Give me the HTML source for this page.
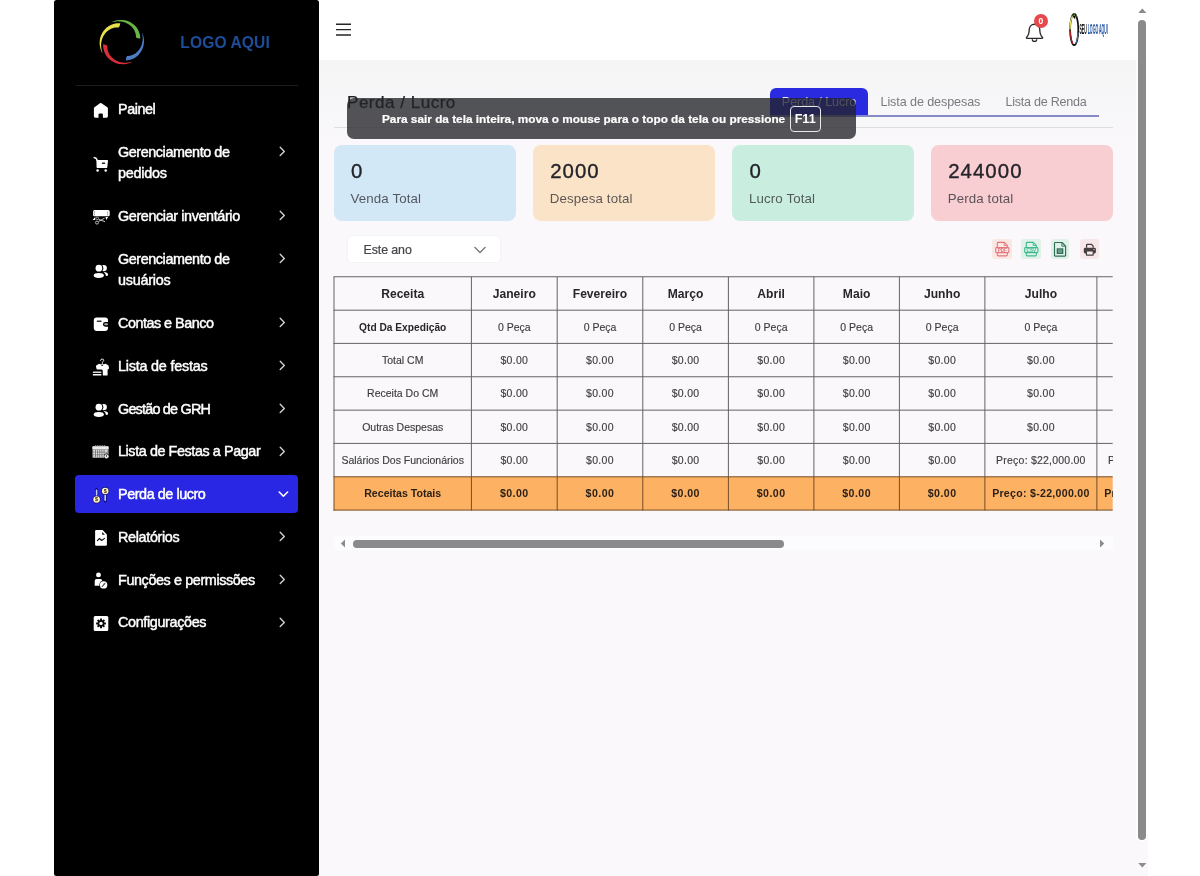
<!DOCTYPE html>
<html lang="pt-BR">
<head>
<meta charset="utf-8">
<title>Perda / Lucro</title>
<style>
*{box-sizing:border-box;margin:0;padding:0}
html,body{width:1200px;height:876px;overflow:hidden;background:#fff}
body{font-family:"Liberation Sans",sans-serif;position:relative;color:#333}
.abs{position:absolute}
/* sidebar */
#sb{position:absolute;left:54px;top:0;width:265px;height:876px;background:#000;border-radius:2.5px}
#sb .logotxt{position:absolute;left:126.3px;top:32.2px;font-weight:700;font-size:15.6px;letter-spacing:.1px;color:#1e4d99;white-space:nowrap;line-height:22px}
#sb .hr{position:absolute;left:22px;top:84.5px;width:222px;height:1px;background:#1c1c1c}
/* main */
#top{position:absolute;left:319px;top:0;width:829px;height:60px;background:#fff}
#main{position:absolute;left:319px;top:60px;width:829px;height:816px;background:#faf8fa linear-gradient(#f5f5f6,#faf8fa) 0 0/100% 90px no-repeat}
#vsb{position:absolute;left:1137px;top:0;width:11px;height:876px}

#top .ham{position:absolute;left:17px;top:23px;width:15px;height:13px}
#top .ham i{position:absolute;left:0;width:15px;height:1.4px;background:#2e2e2e}
.badge{position:absolute;left:1033.9px;top:14px;width:14px;height:14px;border-radius:50%;background:#e5484d;color:#fff;font-size:8.5px;font-weight:700;line-height:14px;text-align:center}
#ttl{position:absolute;left:347px;top:91.3px;font-size:17.1px;line-height:24px;color:#222226;white-space:nowrap;letter-spacing:.48px;-webkit-text-stroke:.25px #222226}
#hr1{position:absolute;left:334px;top:126.5px;width:779px;height:1px;background:#dedde0}
#tabline{position:absolute;left:770px;top:115.3px;width:329px;height:1.7px;background:#858bc6}
.tab{position:absolute;top:88px;height:28.5px;font-size:12.6px;line-height:28px;color:#7a7a80;white-space:nowrap;letter-spacing:-.1px}
.tab.on{left:770px;width:98px;background:#2a2be0;color:#e8e8ff;border-radius:6px 6px 0 0;text-align:center}
#ov{position:absolute;left:347px;top:98px;width:508.5px;height:40.5px;border-radius:7px;background:rgba(35,36,40,.775)}
#ov .t{position:absolute;left:35px;top:10.5px;font-size:11.8px;-webkit-text-stroke:.2px #fff;font-weight:700;color:#fff;line-height:20px;white-space:nowrap}
#ov .k{position:absolute;left:442.7px;top:7.5px;width:31px;height:26px;border:1px solid #e8e8e8;border-radius:4px;font-size:12.6px;font-weight:700;color:#fff;line-height:24px;text-align:center}
.card{position:absolute;top:145px;width:182.3px;height:76.3px;border-radius:8px}
.card b{position:absolute;left:17.5px;top:11.1px;font-size:20.4px;line-height:30px;font-weight:400;color:#23232a;-webkit-text-stroke:.35px #23232a;letter-spacing:1.05px}
.card span{position:absolute;left:17px;top:43.5px;font-size:13.3px;letter-spacing:.12px;line-height:20px;color:rgba(38,38,44,.74);white-space:nowrap}
#sel{position:absolute;left:347.4px;top:235px;width:153.2px;height:27.6px;border:1px solid #f4f3f6;border-radius:5px;background:#fff;font-size:12.4px;line-height:28.6px;color:#444448;padding-left:15.2px;-webkit-text-stroke:.2px #444448;letter-spacing:-.1px}
.ib{position:absolute;top:239px;width:19.5px;height:19.8px;border-radius:3px}
#hs{position:absolute;left:334px;top:536px;width:779px;height:14px;background:#fcfbfd}
#hs .th{position:absolute;left:19px;top:4px;width:431px;height:7.6px;border-radius:3.8px;background:#8a8a8b}
#sb .tx{position:absolute;left:64px;color:#fff;font-size:14.4px;line-height:21.2px;letter-spacing:-.5px;-webkit-text-stroke:.45px #fff;white-space:nowrap}
#sb .act{position:absolute;left:21px;width:223px;height:38.3px;border-radius:4px;background:#2927e3}
#tw{position:absolute;height:236px;overflow:hidden;font-size:10.5px;color:#3d3d40;-webkit-text-stroke:.15px #3d3d40}
#tw .r{position:absolute;left:0;width:100%}
#tw .c{position:absolute;top:.6px;text-align:center;white-space:nowrap}
#tw .c.l{text-align:left}
#tw .h .c{top:1px}
#tw .h{font-size:12.1px;font-weight:700;color:#27272b;-webkit-text-stroke:0}
#tw .q .c:first-child{font-weight:700;color:#27272b;font-size:10.2px;-webkit-text-stroke:0}
#tw .t{font-weight:700;color:#2c2117;font-size:10.6px;-webkit-text-stroke:0}
#tw .m{letter-spacing:.3px}
#tw .p{letter-spacing:.22px}
#tw .t .p{letter-spacing:.28px}
#tw .t .m{letter-spacing:.45px}
#wrap{position:absolute;left:0;top:0;width:1200px;height:876px;will-change:transform}

</style>
</head>
<body>
<div id="wrap">
<div id="sb">
<svg class="abs" style="left:40px;top:14px" width="56" height="56" viewBox="0 0 56 56"><path d="M16.9 8.5 L18.5 7.7 L20.1 7.0 L21.8 6.5 L23.5 6.2 L25.3 5.9 L27.0 5.9 L28.8 6.0 L30.5 6.2 L32.2 6.6 L33.8 7.1 L35.4 7.8 L36.9 8.6 L38.3 9.5 L39.6 10.5 L40.9 11.6 L42.0 12.8 L43.0 14.1 L43.9 15.5 L44.6 16.9 L45.2 18.4 L45.7 19.9 L46.0 21.4 L46.2 22.9 L46.3 24.5 L45.6 24.6 L42.6 23.9 L42.0 22.9 L41.9 21.6 L41.7 20.3 L41.4 19.1 L40.9 17.8 L40.4 16.5 L39.7 15.3 L38.9 14.2 L37.9 13.0 L36.9 12.0 L35.7 11.0 L34.5 10.2 L33.1 9.4 L31.7 8.8 L30.2 8.2 L28.7 7.8 L27.1 7.5 L25.4 7.4 L23.8 7.3 L22.1 7.5 L20.4 7.7 L18.7 8.1 L16.9 8.5z" fill="#68b548"/><path d="M48.1 18.6 L48.7 20.1 L49.3 21.7 L49.6 23.3 L49.9 24.9 L50.0 26.6 L50.0 28.2 L49.8 29.9 L49.5 31.5 L49.1 33.1 L48.6 34.6 L47.9 36.1 L47.1 37.5 L46.2 38.8 L45.3 40.0 L44.2 41.2 L43.0 42.2 L41.8 43.2 L40.5 44.0 L39.1 44.7 L37.7 45.3 L36.3 45.7 L34.9 46.1 L33.5 46.3 L32.0 46.4 L31.9 45.7 L32.4 42.7 L33.3 42.1 L34.5 42.0 L35.7 41.8 L37.0 41.5 L38.2 41.1 L39.4 40.6 L40.5 39.9 L41.7 39.2 L42.7 38.3 L43.7 37.3 L44.7 36.3 L45.5 35.1 L46.3 33.9 L47.0 32.6 L47.5 31.2 L48.0 29.7 L48.3 28.2 L48.6 26.7 L48.7 25.1 L48.7 23.5 L48.6 21.9 L48.3 20.3 L48.1 18.6z" fill="#4c7cc5"/><path d="M39.0 47.4 L37.4 48.3 L35.7 49.0 L33.9 49.5 L32.1 49.9 L30.3 50.2 L28.5 50.2 L26.7 50.1 L24.9 49.9 L23.1 49.4 L21.4 48.9 L19.8 48.1 L18.2 47.3 L16.7 46.3 L15.4 45.2 L14.1 44.0 L13.0 42.7 L12.0 41.3 L11.2 39.8 L10.5 38.3 L9.9 36.7 L9.5 35.1 L9.2 33.5 L9.1 31.9 L9.1 30.3 L9.8 30.3 L12.8 31.2 L13.3 32.3 L13.4 33.6 L13.5 35.0 L13.8 36.3 L14.2 37.7 L14.7 39.0 L15.4 40.3 L16.2 41.5 L17.2 42.7 L18.2 43.8 L19.4 44.8 L20.7 45.8 L22.1 46.6 L23.6 47.3 L25.1 47.9 L26.8 48.3 L28.4 48.6 L30.1 48.7 L31.9 48.8 L33.6 48.6 L35.4 48.3 L37.2 47.9 L39.0 47.4z" fill="#d82f3b"/><path d="M8.6 39.6 L7.7 37.9 L7.0 36.2 L6.4 34.4 L6.0 32.6 L5.7 30.7 L5.6 28.8 L5.7 27.0 L6.0 25.1 L6.4 23.3 L7.0 21.6 L7.8 19.9 L8.6 18.3 L9.7 16.8 L10.8 15.4 L12.1 14.1 L13.4 13.0 L14.9 12.0 L16.4 11.2 L18.0 10.5 L19.6 9.9 L21.2 9.5 L22.9 9.3 L24.5 9.2 L26.2 9.3 L26.2 10.0 L25.2 12.9 L24.0 13.4 L22.6 13.5 L21.3 13.6 L19.9 13.8 L18.5 14.2 L17.1 14.8 L15.8 15.5 L14.5 16.3 L13.3 17.2 L12.1 18.3 L11.1 19.5 L10.1 20.9 L9.3 22.3 L8.6 23.8 L8.0 25.4 L7.6 27.0 L7.3 28.8 L7.1 30.5 L7.1 32.3 L7.3 34.1 L7.6 35.9 L8.1 37.7 L8.6 39.6z" fill="#e8e04c"/></svg>
<div class="logotxt">LOGO AQUI</div>
<div class="hr"></div>
<svg class="abs" style="left:32px;top:96px" width="30" height="30" viewBox="0 0 30 30" ><path d="M13.9 7.3 a1.3 1.3 0 0 1 1.6 0 L21.3 11.3 a1.4 1.4 0 0 1 .6 1.1 V20.3 a1.4 1.4 0 0 1 -1.4 1.4 H16.9 V18.6 a1.1 1.1 0 0 0 -1.1 -1.1 h-2.2 a1.1 1.1 0 0 0 -1.1 1.1 V21.7 H9.3 a1.4 1.4 0 0 1 -1.4 -1.4 V12.4 a1.4 1.4 0 0 1 .6 -1.1z" fill="#fff"/></svg>
<div class="tx" style="top:98.6px"><span style="letter-spacing:-0.46px">Painel</span></div>
<svg class="abs" style="left:32px;top:148px" width="30" height="30" viewBox="0 0 30 30" ><path d="M8.2 9.6 L10 10.3 Q10.6 10.6 10.7 11.5 L10.9 12" stroke="#fff" stroke-width="1.5" fill="none" stroke-linecap="round"/><path d="M10.4 11.9 H21.2 a.8 .8 0 0 1 .8 .9 L21.3 19.2 a1 1 0 0 1 -1 .9 H11.6 a1 1 0 0 1 -1 -.9z" fill="#fff"/><rect x="15.8" y="14.4" width="3.4" height="1.5" rx=".6" fill="#222"/><circle cx="11.6" cy="22.5" r="1.25" fill="#fff"/><circle cx="19.7" cy="22.5" r="1.25" fill="#fff"/></svg>
<div class="tx" style="top:141.6px"><span style="letter-spacing:-0.43px">Gerenciamento de</span><br><span style="letter-spacing:-0.25px">pedidos</span></div>
<svg class="abs" style="left:224px;top:146px" width="8" height="11" viewBox="0 0 8 11" ><path d="M2.2 1.3 L6.3 5.4 L2.2 9.5" fill="none" stroke="#d4d4d4" stroke-width="1.35" stroke-linecap="round" stroke-linejoin="round"/></svg>
<svg class="abs" style="left:32px;top:201px" width="30" height="30" viewBox="0 0 30 30" ><rect x="7" y="9.1" width="16.7" height="6.2" rx="1.5" fill="#fff"/><path d="M8.5 10 Q7.5 12 8.5 14.4" stroke="#777" stroke-width=".7" fill="none"/><path d="M21.6 10 V14.6" stroke="#999" stroke-width=".7"/><path d="M6.6 19 L9.2 16 V19z M19.5 16 H22.1 L20.3 19z" fill="#fff"/><circle cx="11" cy="21.6" r="1.5" fill="none" stroke="#ccc" stroke-width=".9"/><circle cx="11.2" cy="17.3" r="1.3" fill="none" stroke="#bbb" stroke-width=".8"/><path d="M12.5 18.3 L19 20.7 M12.6 20.4 L18.5 17.2" stroke="#ddd" stroke-width=".9"/></svg>
<div class="tx" style="top:205.6px"><span style="letter-spacing:-0.39px">Gerenciar inventário</span></div>
<svg class="abs" style="left:224px;top:210px" width="8" height="11" viewBox="0 0 8 11" ><path d="M2.2 1.3 L6.3 5.4 L2.2 9.5" fill="none" stroke="#d4d4d4" stroke-width="1.35" stroke-linecap="round" stroke-linejoin="round"/></svg>
<svg class="abs" style="left:32px;top:255px" width="30" height="30" viewBox="0 0 30 30" ><circle cx="17.7" cy="13.1" r="3.2" fill="#fff"/><circle cx="12.9" cy="13.2" r="4.45" fill="#000"/><circle cx="12.9" cy="13.2" r="3.35" fill="#fff"/><ellipse cx="12.8" cy="20.5" rx="5.1" ry="2.45" fill="#fff"/><path d="M17.6 17 Q21.9 17 22.1 19.8 Q22.1 21 20 21.1 Q19.8 18.6 17.6 17z" fill="#fff"/></svg>
<div class="tx" style="top:248.6px"><span style="letter-spacing:-0.43px">Gerenciamento de</span><br><span style="letter-spacing:-0.24px">usuários</span></div>
<svg class="abs" style="left:224px;top:253px" width="8" height="11" viewBox="0 0 8 11" ><path d="M2.2 1.3 L6.3 5.4 L2.2 9.5" fill="none" stroke="#d4d4d4" stroke-width="1.35" stroke-linecap="round" stroke-linejoin="round"/></svg>
<svg class="abs" style="left:32px;top:308px" width="30" height="30" viewBox="0 0 30 30" ><rect x="7.8" y="9.4" width="14.2" height="13.5" rx="2.8" fill="#fff"/><rect x="10.7" y="12.5" width="5" height="1.4" rx=".7" fill="#333"/><path d="M22.5 14 H19.3 a2.35 2.35 0 0 0 0 4.7 H22.5z" fill="#000"/><rect x="18.2" y="15.3" width="3.8" height="2" rx="1" fill="#aaa"/></svg>
<div class="tx" style="top:312.6px"><span style="letter-spacing:-0.5px">Contas e Banco</span></div>
<svg class="abs" style="left:224px;top:317px" width="8" height="11" viewBox="0 0 8 11" ><path d="M2.2 1.3 L6.3 5.4 L2.2 9.5" fill="none" stroke="#d4d4d4" stroke-width="1.35" stroke-linecap="round" stroke-linejoin="round"/></svg>
<svg class="abs" style="left:32px;top:351px" width="30" height="30" viewBox="0 0 30 30" ><path d="M14.5 9.4 Q14.7 8 16.2 8 Q17.8 8.1 17.7 9.5 Q17.6 10.4 16.6 10.8 Q16.3 11 16.3 12.5" stroke="#fff" stroke-width=".9" fill="none" stroke-linecap="round"/><path d="M13 12.7 L10.3 14.5 Q9.7 15 10 15.8 L10.6 18 Q11 18.6 12 18.5 L15.8 18.5 Q16.8 19 16.8 20 V24 Q16.8 24.6 17.5 24.6 H21 Q21.6 24.6 21.6 24 V18.5 L22.6 18 Q23.2 17.6 23 16.8 L22.5 14.8 Q22.3 14.3 21.8 14 L19.5 12.7 Q16.3 14 13 12.7z" fill="#fff"/><ellipse cx="16.2" cy="14.5" rx="1" ry=".6" fill="#111"/><rect x="6.8" y="20.4" width="8.6" height="1.5" rx=".5" fill="#ddd"/><rect x="6.8" y="23" width="8.6" height="1.5" rx=".5" fill="#fff"/></svg>
<div class="tx" style="top:355.6px"><span style="letter-spacing:-0.22px">Lista de festas</span></div>
<svg class="abs" style="left:224px;top:360px" width="8" height="11" viewBox="0 0 8 11" ><path d="M2.2 1.3 L6.3 5.4 L2.2 9.5" fill="none" stroke="#d4d4d4" stroke-width="1.35" stroke-linecap="round" stroke-linejoin="round"/></svg>
<svg class="abs" style="left:32px;top:394px" width="30" height="30" viewBox="0 0 30 30" ><circle cx="17.7" cy="13.1" r="3.2" fill="#fff"/><circle cx="12.9" cy="13.2" r="4.45" fill="#000"/><circle cx="12.9" cy="13.2" r="3.35" fill="#fff"/><ellipse cx="12.8" cy="20.5" rx="5.1" ry="2.45" fill="#fff"/><path d="M17.6 17 Q21.9 17 22.1 19.8 Q22.1 21 20 21.1 Q19.8 18.6 17.6 17z" fill="#fff"/></svg>
<div class="tx" style="top:398.6px"><span style="letter-spacing:-0.79px">Gestão de GRH</span></div>
<svg class="abs" style="left:224px;top:403px" width="8" height="11" viewBox="0 0 8 11" ><path d="M2.2 1.3 L6.3 5.4 L2.2 9.5" fill="none" stroke="#d4d4d4" stroke-width="1.35" stroke-linecap="round" stroke-linejoin="round"/></svg>
<svg class="abs" style="left:32px;top:436px" width="30" height="30" viewBox="0 0 30 30" ><rect x="6.4" y="10.3" width="16.2" height="11.7" rx="1" fill="#9a9a9a"/><rect x="6.4" y="10.3" width="16.2" height="2.9" rx=".8" fill="#e8e8e8"/><path d="M9 9.8h10.5" stroke="#aaa" stroke-width="1" stroke-dasharray="1.3 .9"/><g fill="#eee"><rect x="7.5" y="14.2" width="13.8" height="1.4"/><rect x="7.5" y="16.7" width="12" height="1.5"/><rect x="7.5" y="19.3" width="10.5" height="1.5"/></g><g fill="#555"><rect x="9.3" y="13.8" width=".7" height="7.5"/><rect x="11.4" y="13.8" width=".7" height="7.5"/><rect x="13.5" y="13.8" width=".7" height="7.5"/><rect x="15.6" y="13.8" width=".7" height="7.5"/><rect x="17.7" y="13.8" width=".7" height="5"/></g><circle cx="20.5" cy="20.3" r="2.7" fill="#222"/><circle cx="20.5" cy="20.3" r="2.1" fill="#eee"/><rect x="20.15" y="18.9" width=".8" height="2" fill="#333"/></svg>
<div class="tx" style="top:441.1px"><span style="letter-spacing:-0.42px">Lista de Festas a Pagar</span></div>
<svg class="abs" style="left:224px;top:445.5px" width="8" height="11" viewBox="0 0 8 11" ><path d="M2.2 1.3 L6.3 5.4 L2.2 9.5" fill="none" stroke="#d4d4d4" stroke-width="1.35" stroke-linecap="round" stroke-linejoin="round"/></svg>
<div class="act" style="top:475.0px"></div>
<svg class="abs" style="left:32px;top:479px" width="30" height="30" viewBox="0 0 30 30" ><path d="M10.6 10.6 V16.5" stroke="#0f0f7a" stroke-width="3" stroke-linecap="round"/><path d="M10.6 11.4 V16.5" stroke="#c3cfff" stroke-width="1.6" stroke-linecap="round"/><path d="M19.2 16 V22" stroke="#0f0f7a" stroke-width="3" stroke-linecap="round"/><path d="M19.2 16 V21.2" stroke="#c3cfff" stroke-width="1.6" stroke-linecap="round"/><circle cx="10.6" cy="20.5" r="4" fill="#14146e"/><circle cx="10.6" cy="20.5" r="3.3" fill="#fff1c6"/><circle cx="19.2" cy="12" r="4" fill="#14146e"/><circle cx="19.2" cy="12" r="3.3" fill="#fff1c6"/><text x="10.6" y="22.4" text-anchor="middle" font-family="Liberation Sans, sans-serif" font-weight="700" font-size="5.4" fill="#33280a">$</text><text x="19.2" y="13.9" text-anchor="middle" font-family="Liberation Sans, sans-serif" font-weight="700" font-size="5.4" fill="#33280a">$</text></svg>
<div class="tx" style="top:483.9px"><span style="letter-spacing:-0.44px">Perda de lucro</span></div>
<svg class="abs" style="left:224px;top:489.8px" width="11" height="8" viewBox="0 0 11 8" ><path d="M1.2 2 L5.4 6.2 L9.6 2" fill="none" stroke="#fff" stroke-width="1.6" stroke-linecap="round" stroke-linejoin="round"/></svg>
<svg class="abs" style="left:32px;top:522px" width="30" height="30" viewBox="0 0 30 30" ><path d="M10.3 8.1 H16.6 L20.9 12.5 V22.6 a1.2 1.2 0 0 1 -1.2 1.2 H10.3 a1.2 1.2 0 0 1 -1.2 -1.2 V9.3 a1.2 1.2 0 0 1 1.2 -1.2z" fill="#fff"/><path d="M16.2 10 L18.9 12.8 H16.8 a.6 .6 0 0 1 -.6 -.6z" fill="#111"/><path d="M11.4 18.6 L13.5 16.5 L15.7 18.5 L18.5 16.4" stroke="#111" stroke-width="1.1" fill="none" stroke-linecap="round" stroke-linejoin="round"/></svg>
<div class="tx" style="top:526.6px"><span style="letter-spacing:-0.34px">Relatórios</span></div>
<svg class="abs" style="left:224px;top:531px" width="8" height="11" viewBox="0 0 8 11" ><path d="M2.2 1.3 L6.3 5.4 L2.2 9.5" fill="none" stroke="#d4d4d4" stroke-width="1.35" stroke-linecap="round" stroke-linejoin="round"/></svg>
<svg class="abs" style="left:32px;top:565px" width="30" height="30" viewBox="0 0 30 30" ><circle cx="12.5" cy="9.9" r="2.45" fill="#fff"/><path d="M10.5 13.9 H14.5 Q16.2 14 16.3 16 V20.8 H8.7 V16 Q8.8 14 10.5 13.9z" fill="#fff"/><circle cx="17.6" cy="19.9" r="4.3" fill="#000"/><circle cx="17.6" cy="19.9" r="3.7" fill="#fff"/><path d="M16.2 21.5 L18.5 18.8" stroke="#444" stroke-width="1.1" stroke-linecap="round"/><circle cx="18.6" cy="18.6" r=".9" fill="#666"/></svg>
<div class="tx" style="top:569.6px"><span style="letter-spacing:-0.4px">Funções e permissões</span></div>
<svg class="abs" style="left:224px;top:574px" width="8" height="11" viewBox="0 0 8 11" ><path d="M2.2 1.3 L6.3 5.4 L2.2 9.5" fill="none" stroke="#d4d4d4" stroke-width="1.35" stroke-linecap="round" stroke-linejoin="round"/></svg>
<svg class="abs" style="left:32px;top:608px" width="30" height="30" viewBox="0 0 30 30" ><rect x="7.7" y="8" width="14.6" height="15" rx="1.5" fill="#fff"/><g transform="translate(15 15.4)"><g fill="#0a0a0a"><circle r="3.3"/><rect x="-1" y="-4.9" width="2" height="9.8" rx=".3"/><rect x="-1" y="-4.9" width="2" height="9.8" rx=".3" transform="rotate(45)"/><rect x="-1" y="-4.9" width="2" height="9.8" rx=".3" transform="rotate(90)"/><rect x="-1" y="-4.9" width="2" height="9.8" rx=".3" transform="rotate(135)"/></g><circle r="1.7" fill="#fff"/></g></svg>
<div class="tx" style="top:612.3px"><span style="letter-spacing:-0.36px">Configurações</span></div>
<svg class="abs" style="left:224px;top:616.7px" width="8" height="11" viewBox="0 0 8 11" ><path d="M2.2 1.3 L6.3 5.4 L2.2 9.5" fill="none" stroke="#d4d4d4" stroke-width="1.35" stroke-linecap="round" stroke-linejoin="round"/></svg>
</div>
<div id="top">
  <svg class="abs" style="left:16px;top:20px" width="18" height="20" viewBox="0 0 18 20"><path d="M1 4.2H16M1 9.6H16M1 15H16" stroke="#262626" stroke-width="1.45" fill="none"/></svg>
</div>
<div id="main"></div>
<svg class="abs" style="left:1024px;top:21px" width="21" height="23" viewBox="0 0 21 23"><path d="M10.5 3.2c-3.2 0-5.3 2.5-5.3 5.6 0 4.6-1.6 6.6-2.7 7.6-.3.3-.1.9.4.9h15.2c.5 0 .7-.6.4-.9-1.1-1-2.7-3-2.7-7.6 0-3.1-2.1-5.6-5.3-5.6z" fill="none" stroke="#2a2a2a" stroke-width="1.35"/><path d="M8.3 18.2a2.2 2.2 0 0 0 4.4 0" fill="none" stroke="#2a2a2a" stroke-width="1.3"/></svg>
<div class="badge">0</div>
<svg class="abs" style="left:1062px;top:8px" width="52" height="44" viewBox="0 0 52 44"><g fill="none" stroke-linecap="round"><ellipse cx="12.2" cy="21.5" rx="4.1" ry="15.6" stroke="#0d0d0d" stroke-width="1.7"/><path d="M8.1 21 Q8.2 11.5 11 7.2" stroke="#e9e362" stroke-width="1.25"/><path d="M8.2 23 Q8.6 31 10.6 35.2" stroke="#b3202a" stroke-width="1.3"/><path d="M11.6 5.8 Q13.2 5 14.4 8" stroke="#4c8a33" stroke-width="1.1"/><path d="M16.2 25 Q15.8 32 13.8 35.6" stroke="#4a78b5" stroke-width="1"/><path d="M10.8 7.4 L12.8 10.2 M13.4 6.6 L12.6 9.6" stroke="#0d0d0d" stroke-width="1.2"/></g><g transform="translate(17.4 26) scale(.228 .88)"><text x="0" y="0" font-family="Liberation Sans, sans-serif" font-weight="700" font-size="15.6" fill="#111">SEU <tspan fill="#1d4fa3">LOGO AQUI</tspan></text></g></svg>

<div id="ttl">Perda / Lucro</div>
<div id="hr1"></div>
<div class="tab on">Perda / Lucro</div>
<div class="tab" style="left:880.5px">Lista de despesas</div>
<div class="tab" style="left:1005.5px;letter-spacing:-.27px">Lista de Renda</div>
<div id="tabline"></div>

<div class="card" style="left:333.5px;background:#d3e8f7"><b>0</b><span>Venda Total</span></div>
<div class="card" style="left:532.7px;background:#fbe3c8"><b>2000</b><span>Despesa total</span></div>
<div class="card" style="left:732px;background:#c9eedf"><b>0</b><span>Lucro Total</span></div>
<div class="card" style="left:930.7px;background:#f8ced2"><b>244000</b><span>Perda total</span></div>

<div id="sel">Este ano<svg class="abs" style="left:125px;top:8.5px" width="14" height="10" viewBox="0 0 14 10"><path d="M1.5 2 L7 7.5 L12.5 2" fill="none" stroke="#77777b" stroke-width="1.3"/></svg></div>

<div class="ib" style="left:992px;background:#fbe8e5"><svg class="abs" style="left:0;top:0" width="20" height="20" viewBox="0 0 20 20"><g fill="none" stroke="#e3767c" stroke-width="1.1" stroke-linejoin="round"><path d="M5.3 8.5 V4.3 a.9 .9 0 0 1 .9 -.9 H12.3 L15.3 6.4 V8.5"/><path d="M12.2 3.5 V6.5 H15.2" stroke-width=".9"/><rect x="3.7" y="8.6" width="13.2" height="5" rx=".8"/><path d="M5.3 13.7 V16 a.9 .9 0 0 0 .9 .9 H14.4 a.9 .9 0 0 0 .9 -.9 V13.7"/></g><text x="10.3" y="12.8" text-anchor="middle" font-family="Liberation Sans, sans-serif" font-weight="700" font-size="4.6" fill="#e3767c">PDF</text></svg></div>
<div class="ib" style="left:1021px;background:#dff1e9"><svg class="abs" style="left:0;top:0" width="20" height="20" viewBox="0 0 20 20"><g fill="none" stroke="#3fba8d" stroke-width="1.1" stroke-linejoin="round"><path d="M5.3 8.5 V4.3 a.9 .9 0 0 1 .9 -.9 H12.3 L15.3 6.4 V8.5"/><path d="M12.2 3.5 V6.5 H15.2" stroke-width=".9"/><rect x="3.7" y="8.6" width="13.2" height="5" rx=".8"/><path d="M5.3 13.7 V16 a.9 .9 0 0 0 .9 .9 H14.4 a.9 .9 0 0 0 .9 -.9 V13.7"/></g><text x="10.3" y="12.8" text-anchor="middle" font-family="Liberation Sans, sans-serif" font-weight="700" font-size="4.6" fill="#3fba8d">CSV</text></svg></div>
<div class="ib" style="left:1051.3px;width:17.5px;background:#e0f1e9"><svg class="abs" style="left:-1.6px;top:0" width="20" height="20" viewBox="0 0 20 20"><g fill="none" stroke="#2f6d57" stroke-width="1.15" stroke-linejoin="round"><path d="M5.3 3.5 H12 L15.6 7.1 V16.4 a.8 .8 0 0 1 -.8 .8 H5.3 a.8 .8 0 0 1 -.8 -.8 V4.3 a.8 .8 0 0 1 .8 -.8z"/><path d="M11.9 3.7 V7.2 H15.4" stroke-width=".9"/></g><rect x="6.7" y="9.3" width="6.6" height="5.7" fill="#2f6d57"/><path d="M9 10.3 V14 M11 10.3 V14" stroke="#bfe3d3" stroke-width=".8"/></svg></div>
<div class="ib" style="left:1080px;width:18.6px;background:#f7e7e9"><svg class="abs" style="left:.6px;top:1.6px" width="17" height="17" viewBox="0 0 20 20"><path d="M6.6 8 V4.6 a.7 .7 0 0 1 .7 -.7 H12.2 L14.3 6 V8" fill="none" stroke="#463e41" stroke-width="1.5" stroke-linejoin="round"/><rect x="3.3" y="8" width="14.2" height="6.6" rx="1.6" fill="#463e41"/><rect x="6.4" y="11.7" width="8" height="5" rx=".4" fill="#f7e8ea" stroke="#463e41" stroke-width="1.4"/><circle cx="15.3" cy="10.1" r=".7" fill="#f7e8ea"/></svg></div>

<div id="tw" style="left:333px;top:276px;width:779.7px"><svg class="abs" style="left:0;top:0" width="779.7" height="236" viewBox="0 0 779.7 236"><rect x="1.00" y="200.80" width="778.70" height="33.30" fill="#fdb163"/><path d="M0.50 0.75H779.70M0.50 34.20H779.70M0.50 67.40H779.70M0.50 100.75H779.70M0.50 134.15H779.70M0.50 167.40H779.70M1.00 0.75V200.80M138.40 0.75V200.80M224.20 0.75V200.80M309.80 0.75V200.80M395.40 0.75V200.80M480.90 0.75V200.80M566.40 0.75V200.80M651.90 0.75V200.80M763.90 0.75V200.80" stroke="#626266" stroke-width="1" fill="none"/><path d="M0.50 200.80H779.70M0.50 234.10H779.70M1.00 200.80V234.60M138.40 200.80V234.60M224.20 200.80V234.60M309.80 200.80V234.60M395.40 200.80V234.60M480.90 200.80V234.60M566.40 200.80V234.60M651.90 200.80V234.60M763.90 200.80V234.60" stroke="#744d24" stroke-width="1" fill="none"/></svg>
<div class="r h" style="top:0.75px;height:33.45px;line-height:33.45px">
<span class="c" style="left:1.00px;width:137.40px">Receita</span>
<span class="c" style="left:138.40px;width:85.80px">Janeiro</span>
<span class="c" style="left:224.20px;width:85.60px">Fevereiro</span>
<span class="c" style="left:309.80px;width:85.60px">Março</span>
<span class="c" style="left:395.40px;width:85.50px">Abril</span>
<span class="c" style="left:480.90px;width:85.50px">Maio</span>
<span class="c" style="left:566.40px;width:85.50px">Junho</span>
<span class="c" style="left:651.90px;width:112.00px">Julho</span>
<span class="c p" style="left:763.90px;width:112px">Agosto</span>
</div>
<div class="r q" style="top:34.20px;height:33.20px;line-height:33.20px">
<span class="c" style="left:1.00px;width:137.40px">Qtd Da Expedição</span>
<span class="c" style="left:138.40px;width:85.80px">0 Peça</span>
<span class="c" style="left:224.20px;width:85.60px">0 Peça</span>
<span class="c" style="left:309.80px;width:85.60px">0 Peça</span>
<span class="c" style="left:395.40px;width:85.50px">0 Peça</span>
<span class="c" style="left:480.90px;width:85.50px">0 Peça</span>
<span class="c" style="left:566.40px;width:85.50px">0 Peça</span>
<span class="c" style="left:651.90px;width:112.00px">0 Peça</span>
<span class="c p" style="left:763.90px;width:112px">0 Peça</span>
</div>
<div class="r " style="top:67.40px;height:33.35px;line-height:33.35px">
<span class="c" style="left:1.00px;width:137.40px">Total CM</span>
<span class="c m" style="left:138.40px;width:85.80px">$0.00</span>
<span class="c m" style="left:224.20px;width:85.60px">$0.00</span>
<span class="c m" style="left:309.80px;width:85.60px">$0.00</span>
<span class="c m" style="left:395.40px;width:85.50px">$0.00</span>
<span class="c m" style="left:480.90px;width:85.50px">$0.00</span>
<span class="c m" style="left:566.40px;width:85.50px">$0.00</span>
<span class="c m" style="left:651.90px;width:112.00px">$0.00</span>
<span class="c p" style="left:763.90px;width:112px">$0.00</span>
</div>
<div class="r " style="top:100.75px;height:33.40px;line-height:33.40px">
<span class="c" style="left:1.00px;width:137.40px">Receita Do CM</span>
<span class="c m" style="left:138.40px;width:85.80px">$0.00</span>
<span class="c m" style="left:224.20px;width:85.60px">$0.00</span>
<span class="c m" style="left:309.80px;width:85.60px">$0.00</span>
<span class="c m" style="left:395.40px;width:85.50px">$0.00</span>
<span class="c m" style="left:480.90px;width:85.50px">$0.00</span>
<span class="c m" style="left:566.40px;width:85.50px">$0.00</span>
<span class="c m" style="left:651.90px;width:112.00px">$0.00</span>
<span class="c p" style="left:763.90px;width:112px">$0.00</span>
</div>
<div class="r " style="top:134.15px;height:33.25px;line-height:33.25px">
<span class="c" style="left:1.00px;width:137.40px">Outras Despesas</span>
<span class="c m" style="left:138.40px;width:85.80px">$0.00</span>
<span class="c m" style="left:224.20px;width:85.60px">$0.00</span>
<span class="c m" style="left:309.80px;width:85.60px">$0.00</span>
<span class="c m" style="left:395.40px;width:85.50px">$0.00</span>
<span class="c m" style="left:480.90px;width:85.50px">$0.00</span>
<span class="c m" style="left:566.40px;width:85.50px">$0.00</span>
<span class="c m" style="left:651.90px;width:112.00px">$0.00</span>
<span class="c p" style="left:763.90px;width:112px">$0.00</span>
</div>
<div class="r " style="top:167.40px;height:33.40px;line-height:33.40px">
<span class="c" style="left:1.00px;width:137.40px">Salários Dos Funcionários</span>
<span class="c m" style="left:138.40px;width:85.80px">$0.00</span>
<span class="c m" style="left:224.20px;width:85.60px">$0.00</span>
<span class="c m" style="left:309.80px;width:85.60px">$0.00</span>
<span class="c m" style="left:395.40px;width:85.50px">$0.00</span>
<span class="c m" style="left:480.90px;width:85.50px">$0.00</span>
<span class="c m" style="left:566.40px;width:85.50px">$0.00</span>
<span class="c p" style="left:651.90px;width:112.00px">Preço: $22,000.00</span>
<span class="c p" style="left:763.90px;width:112px">Preço: $22,000.00</span>
</div>
<div class="r t" style="top:200.80px;height:33.30px;line-height:33.30px">
<span class="c" style="left:1.00px;width:137.40px">Receitas Totais</span>
<span class="c m" style="left:138.40px;width:85.80px">$0.00</span>
<span class="c m" style="left:224.20px;width:85.60px">$0.00</span>
<span class="c m" style="left:309.80px;width:85.60px">$0.00</span>
<span class="c m" style="left:395.40px;width:85.50px">$0.00</span>
<span class="c m" style="left:480.90px;width:85.50px">$0.00</span>
<span class="c m" style="left:566.40px;width:85.50px">$0.00</span>
<span class="c p" style="left:651.90px;width:112.00px">Preço: $-22,000.00</span>
<span class="c p" style="left:763.90px;width:112px">Preço: $-22,000.00</span>
</div></div>

<div id="hs"><svg class="abs" style="left:6px;top:3px" width="6" height="9" viewBox="0 0 6 9"><path d="M5 0.5 L0.8 4.5 L5 8.5z" fill="#8b8b8d"/></svg><div class="th"></div><svg class="abs" style="left:765px;top:3px" width="6" height="9" viewBox="0 0 6 9"><path d="M1 0.5 L5.2 4.5 L1 8.5z" fill="#8b8b8d"/></svg></div>

<div id="ov"><div class="t">Para sair da tela inteira, mova o mouse para o topo da tela ou pressione</div><div class="k">F11</div></div>

<div id="vsb">
  <svg class="abs" style="left:0;top:7px" width="11" height="8" viewBox="0 0 11 8"><path d="M1.2 6 L5.3 1.5 L9.4 6z" fill="#8b8b8d"/></svg>
  <div class="abs" style="left:1.3px;top:20px;width:7.8px;height:820px;border-radius:3.9px;background:#8a8a8b;box-shadow:0 0 0 1.6px #fff"></div>
  <svg class="abs" style="left:0;top:861px" width="11" height="8" viewBox="0 0 11 8"><path d="M1.2 2 L5.3 6.5 L9.4 2z" fill="#8b8b8d"/></svg>
</div>


</div>
</body>
</html>
